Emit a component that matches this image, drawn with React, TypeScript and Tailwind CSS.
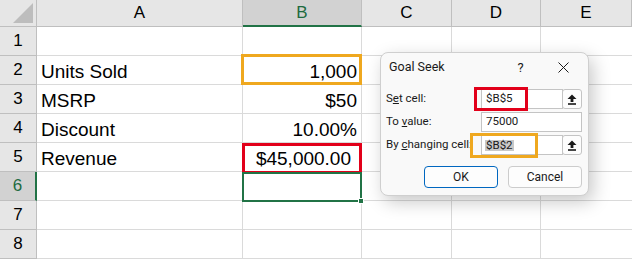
import React from "react";

const cols = ["A", "B", "C", "D", "E"];

const rows: { n: number; label?: string; value?: string }[] = [
  { n: 1 },
  { n: 2, label: "Units Sold", value: "1,000" },
  { n: 3, label: "MSRP", value: "$50" },
  { n: 4, label: "Discount", value: "10.00%" },
  { n: 5, label: "Revenue", value: "$45,000.00" },
  { n: 6 },
  { n: 7 },
  { n: 8 },
];

const RefButton = () => (
  <div className="w-[20px] h-[20px] -ml-px flex items-center justify-center rounded-[3px] border border-[#c4c4c4] bg-[#fdfdfd]">
    <svg width="10" height="11" viewBox="0 0 10 11">
      <path d="M5 0.5 L9.5 5 L6.4 5 L6.4 8 L3.6 8 L3.6 5 L0.5 5 Z" fill="#1a1a1a" />
      <rect x="1" y="9.2" width="8" height="1.6" fill="#1a1a1a" />
    </svg>
  </div>
);

const GoalSeek = () => (
  <div
    className="absolute left-[380px] top-[52px] w-[209px] h-[144px] rounded-[8px] border border-[#cfcfcf] bg-[#f9f9f9] shadow-[4px_6px_18px_rgba(0,0,0,0.22)] text-[#1a1a1a] flex flex-col"
    style={{ fontFamily: "Roboto, 'Liberation Sans', sans-serif" }}
  >
    <div className="h-[29px] flex items-center pl-[8px] text-[12.5px]">
      <span>Goal Seek</span>
      <span className="ml-[73px] text-[13px]">?</span>
      <svg className="ml-[34px]" width="11" height="11" viewBox="0 0 11 11">
        <path d="M0.5 0.5 L10.5 10.5 M10.5 0.5 L0.5 10.5" stroke="#1a1a1a" strokeWidth="1" />
      </svg>
    </div>
    <div className="flex flex-col gap-[3px] mt-[7px] pl-[5px] text-[11.5px]">
      <div className="flex items-center h-[20px]">
        <span className="w-[95px]">
          S<u>e</u>t cell:
        </span>
        <div className="flex-1 flex h-full mr-[6px]">
          <div className="flex-1 border border-[#c4c4c4] bg-white flex items-center pl-[4px]">$B$5</div>
          <RefButton />
        </div>
      </div>
      <div className="flex items-center h-[20px]">
        <span className="w-[95px]">
          To <u>v</u>alue:
        </span>
        <div className="flex-1 h-full mr-[6px] border border-[#c4c4c4] bg-white flex items-center pl-[4px]">
          75000
        </div>
      </div>
      <div className="flex items-center h-[20px]">
        <span className="w-[95px] whitespace-nowrap">
          By <u>c</u>hanging cell:
        </span>
        <div className="flex-1 flex h-full mr-[6px]">
          <div className="flex-1 border border-[#c4c4c4] bg-white flex items-center pl-[3px]">
            <span className="bg-[#c8c8c8] px-px leading-[11px]">$B$2</span>
          </div>
          <RefButton />
        </div>
      </div>
    </div>
    <div className="flex gap-[10px] mt-[11px] pl-[43px] text-[12px]">
      <div className="w-[74px] h-[22px] rounded-[4px] border border-[#0067c0] bg-[#fdfdfd] flex items-center justify-center">
        OK
      </div>
      <div className="w-[74px] h-[22px] rounded-[4px] border border-[#cccccc] bg-[#fdfdfd] flex items-center justify-center">
        Cancel
      </div>
    </div>
    <div className="absolute left-[93px] top-[34px] w-[54px] h-[24px] border-[3px] border-[#e2001a]" />
    <div className="absolute left-[89px] top-[80px] w-[68px] h-[25px] border-[3px] border-[#efa81f]" />
  </div>
);

export default function App() {
  return (
    <div
      className="relative w-[632px] h-[260px] overflow-hidden bg-white text-black"
      style={{ fontFamily: "'Liberation Sans', Arial, sans-serif" }}
    >
      <div className="grid grid-cols-[37px_206px_119px_90px_89px_91px] grid-rows-[27px_repeat(8,29px)]">
        <div className="bg-[#e6e6e6] border-r border-b border-[#bfbfbf] relative">
          <div className="absolute right-[3px] bottom-[3px] w-0 h-0 border-l-[20px] border-l-transparent border-b-[20px] border-b-[#bdbdbd]" />
        </div>
        {cols.map((c) =>
          c === "B" ? (
            <div
              key={c}
              className="bg-[#d2d2d2] border-r border-[#bfbfbf] border-b-2 border-b-[#217346] text-[#1e6b3f] text-[17px] flex items-center justify-center"
            >
              {c}
            </div>
          ) : (
            <div
              key={c}
              className="bg-[#e6e6e6] border-r border-b border-[#bfbfbf] text-[17px] flex items-center justify-center"
            >
              {c}
            </div>
          )
        )}
        {rows.map((r) => (
          <React.Fragment key={r.n}>
            {r.n === 6 ? (
              <div className="bg-[#d2d2d2] border-r-2 border-r-[#217346] border-b border-b-[#bfbfbf] text-[#1e6b3f] text-[17px] flex items-center justify-center">
                {r.n}
              </div>
            ) : (
              <div className="bg-[#e6e6e6] border-r border-b border-[#bfbfbf] text-[17px] flex items-center justify-center">
                {r.n}
              </div>
            )}
            <div className="border-r border-b border-[#dadada] flex items-end pl-[4px] text-[19px] leading-[24px]">
              {r.label}
            </div>
            <div className="border-r border-b border-[#dadada] flex items-end justify-end pr-[4px] text-[19px] leading-[24px]">
              {r.n === 5 ? <span className="pr-[6px]">{r.value}</span> : r.value}
            </div>
            <div className="border-r border-b border-[#dadada]" />
            <div className="border-r border-b border-[#dadada]" />
            <div className="border-b border-[#dadada]" />
          </React.Fragment>
        ))}
      </div>

      <div className="absolute left-[241px] top-[54px] w-[121px] h-[31px] border-[3px] border-[#efa81f]" />
      <div className="absolute left-[242px] top-[143px] w-[120px] h-[31px] border-[3px] border-[#e2001a]" />
      <div className="absolute left-[242px] top-[172px] w-[120px] h-[30px] border-2 border-[#217346]">
        <div className="absolute -right-[4px] -bottom-[4px] w-[6px] h-[6px] bg-[#217346] border border-white" />
      </div>

      <GoalSeek />
    </div>
  );
}
